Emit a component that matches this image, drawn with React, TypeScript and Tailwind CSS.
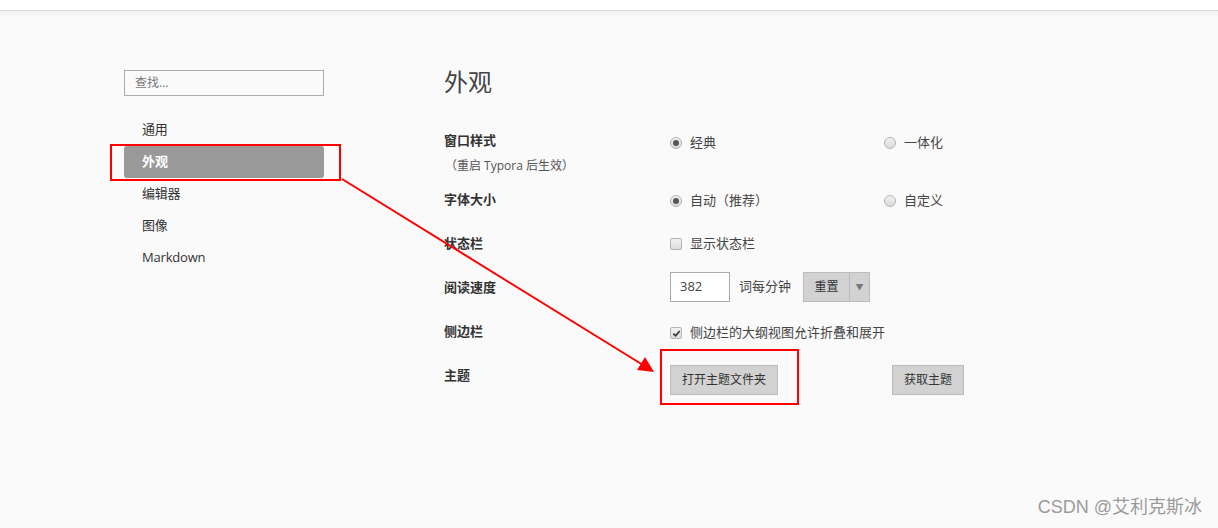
import React from 'react';

const navItems = ['通用', '外观', '编辑器', '图像', 'Markdown'];

function Radio({ checked }: { checked?: boolean }) {
  return (
    <span className="flex h-[12px] w-[12px] items-center justify-center rounded-full border border-[#b4b4b4] bg-gradient-to-b from-[#f2f2f2] to-[#d9d9d9]">
      {checked && <span className="h-[6px] w-[6px] rounded-full bg-[#555]" />}
    </span>
  );
}

function Checkbox({ checked }: { checked?: boolean }) {
  return (
    <span className="flex h-[12px] w-[12px] items-center justify-center rounded-[2px] border border-[#b4b4b4] bg-gradient-to-b from-[#f2f2f2] to-[#dcdcdc]">
      {checked && (
        <svg width="9" height="9" viewBox="0 0 10 10">
          <path d="M1.5 5.2 L4 7.6 L8.6 2.2" fill="none" stroke="#333" strokeWidth="1.9" />
        </svg>
      )}
    </span>
  );
}

function Option({ checked, label, box }: { checked?: boolean; label: string; box?: boolean }) {
  return (
    <div className="flex items-center gap-[8px]">
      {box ? <Checkbox checked={checked} /> : <Radio checked={checked} />}
      <span className="text-[13px] text-[#444]">{label}</span>
    </div>
  );
}

function Label({ children }: { children: React.ReactNode }) {
  return <div className="w-[226px] shrink-0 text-[13px] font-semibold leading-[20px] text-[#333]">{children}</div>;
}

export default function App() {
  return (
    <div
      className="relative h-[528px] w-[1218px] overflow-hidden bg-[#fafafa]"
      style={{ fontFamily: '"Open Sans", "Noto Sans CJK SC", sans-serif' }}
    >
      <div className="h-[11px] border-b border-[#d6d6d6] bg-white" />
      <div className="h-[6px] bg-gradient-to-b from-[#f0f0f0] to-[#fafafa]" />

      <div className="flex pl-[124px] pt-[53px]">
        {/* sidebar */}
        <div className="w-[200px] shrink-0">
          <div className="flex h-[26px] items-center border border-[#acacac] bg-[#fafafa] pl-[10px] text-[12px] text-[#777]">
            查找...
          </div>
          <div className="mt-[18px] flex flex-col">
            {navItems.map((item) =>
              item === '外观' ? (
                <div
                  key={item}
                  className="flex h-[32px] items-center rounded-[3px] bg-[#999] pl-[18px] text-[13px] font-semibold text-white"
                >
                  {item}
                </div>
              ) : (
                <div key={item} className="flex h-[32px] items-center pl-[18px] text-[13px] tracking-[-0.2px] text-[#333]">
                  {item}
                </div>
              ),
            )}
          </div>
        </div>

        {/* content */}
        <div className="ml-[120px] -mt-[4px] flex flex-col">
          <h1 className="h-[32px] text-[24px] font-normal leading-[32px] text-[#444]">外观</h1>

          <div className="mt-[20px] flex h-[59px] items-start">
            <div className="w-[226px] shrink-0 pt-[12px]">
              <div className="text-[13px] font-semibold leading-[20px] text-[#333]">窗口样式</div>
              <div className="mt-[8px] pl-[1px] text-[12px] leading-[16px] text-[#555]">（重启 Typora 后生效）</div>
            </div>
            <div className="flex pt-[15px]">
              <div className="w-[214px]">
                <Option checked label="经典" />
              </div>
              <Option label="一体化" />
            </div>
          </div>

          <div className="flex h-[44px] items-center">
            <Label>字体大小</Label>
            <div className="flex pt-[3px]">
              <div className="w-[214px]">
                <Option checked label="自动（推荐）" />
              </div>
              <Option label="自定义" />
            </div>
          </div>

          <div className="flex h-[44px] items-center">
            <Label>状态栏</Label>
            <div className="pt-[2px]">
              <Option box label="显示状态栏" />
            </div>
          </div>

          <div className="flex h-[44px] items-center">
            <Label>阅读速度</Label>
            <div className="flex items-center">
              <div className="flex h-[30px] w-[60px] items-center border border-[#aaa] bg-white pl-[9px] text-[13px] text-[#444]">
                382
              </div>
              <span className="ml-[9px] text-[13px] text-[#444]">词每分钟</span>
              <div className="ml-[12px] flex h-[30px] border border-[#bcbcbc] bg-[#d2d2d2]">
                <div className="flex w-[46px] items-center justify-center border-r border-[#bcbcbc] text-[12px] text-[#333]">
                  重置
                </div>
                <div className="flex w-[19px] items-center justify-center text-[8px] text-[#777]">▼</div>
              </div>
            </div>
          </div>

          <div className="flex h-[44px] items-center">
            <Label>侧边栏</Label>
            <div className="pt-[4px]">
              <Option box checked label="侧边栏的大纲视图允许折叠和展开" />
            </div>
          </div>

          <div className="flex h-[44px] items-start">
            <div className="w-[226px] shrink-0 pt-[12px] text-[13px] font-semibold leading-[20px] text-[#333]">主题</div>
            <div className="flex pt-[12px]">
              <div className="flex h-[30px] w-[108px] items-center justify-center border border-[#bcbcbc] bg-[#d2d2d2] text-[12px] text-[#333]">
                打开主题文件夹
              </div>
              <div className="ml-[114px] flex h-[30px] w-[72px] items-center justify-center border border-[#bcbcbc] bg-[#d2d2d2] text-[12px] text-[#333]">
                获取主题
              </div>
            </div>
          </div>
        </div>
      </div>

      {/* annotations */}
      <div className="absolute left-[110px] top-[144px] h-[37px] w-[231px] border-2 border-[#ff0000]" />
      <div className="absolute left-[660px] top-[349px] h-[56px] w-[139px] border-2 border-[#ff0000]" />
      <svg className="pointer-events-none absolute left-0 top-0" width="1218" height="528">
        <line x1="342" y1="179" x2="643" y2="365" stroke="#ff0000" strokeWidth="2" />
        <polygon points="654,372 637,370 645,357" fill="#ff0000" />
      </svg>

      <div
        className="absolute bottom-[7px] right-[16px] text-[18px] text-[#9a9a9a]"
        style={{ fontFamily: '"Liberation Sans", "Noto Sans CJK SC", sans-serif', textShadow: '0 0 2px #fff' }}
      >
        CSDN @艾利克斯冰
      </div>
    </div>
  );
}
